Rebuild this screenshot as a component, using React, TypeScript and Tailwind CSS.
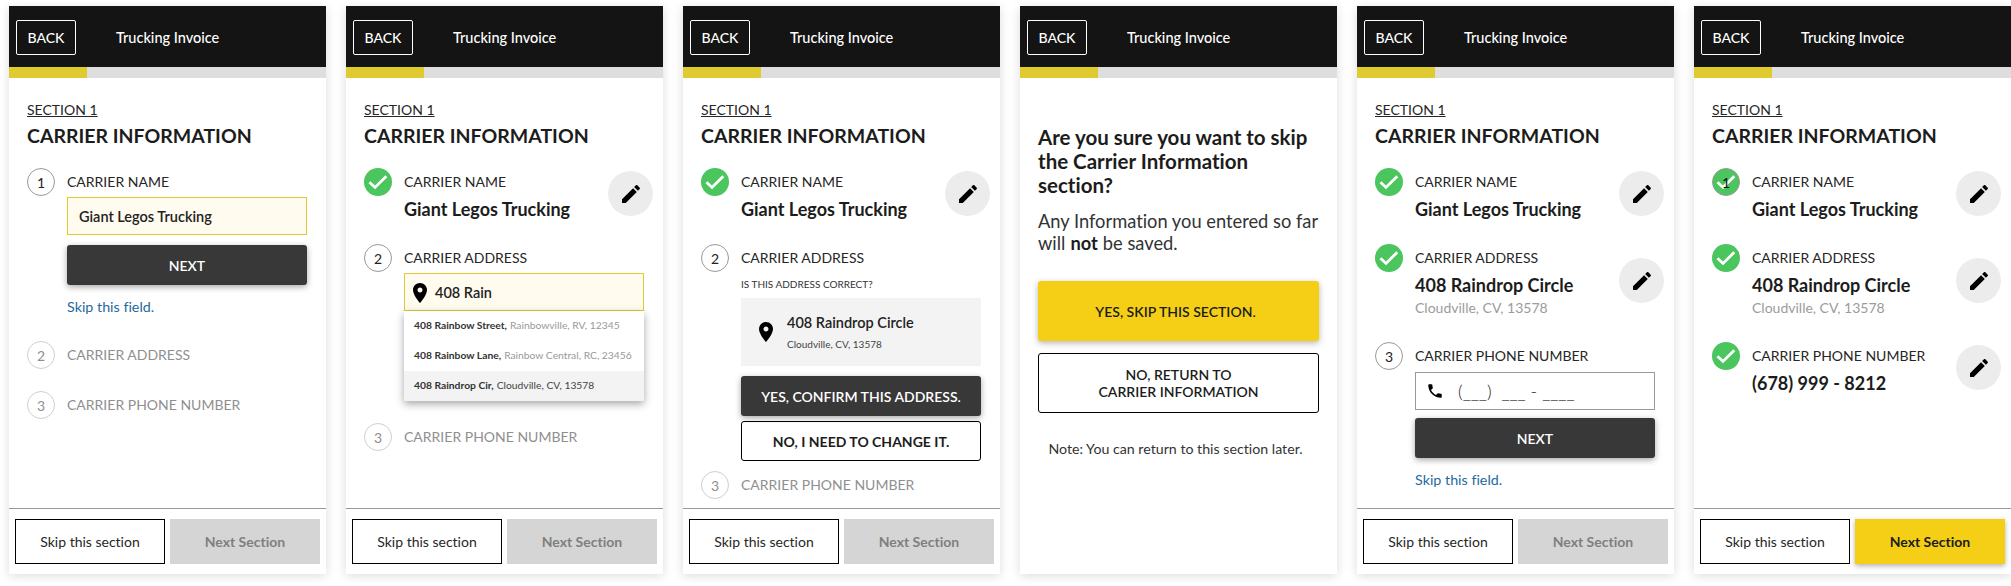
import React from "react";

const PENCIL = "M3 17.25V21h3.75L17.81 9.94l-3.75-3.75L3 17.25zM20.71 7.04c.39-.39.39-1.02 0-1.41l-2.34-2.34c-.39-.39-1.02-.39-1.41 0l-1.83 1.83 3.75 3.75 1.83-1.83z";
const PIN = "M12 2C8.13 2 5 5.13 5 9c0 5.25 7 13 7 13s7-7.75 7-13c0-3.87-3.13-7-7-7zm0 9.5c-1.38 0-2.5-1.12-2.5-2.5s1.12-2.5 2.5-2.5 2.5 1.12 2.5 2.5-1.12 2.5-2.5 2.5z";
const PHONE = "M6.62 10.79c1.44 2.83 3.76 5.14 6.59 6.59l2.2-2.2c.27-.27.67-.36 1.02-.24 1.12.37 2.33.57 3.57.57.55 0 1 .45 1 1V20c0 .55-.45 1-1 1-9.39 0-17-7.61-17-17 0-.55.45-1 1-1h3.5c.55 0 1 .45 1 1 0 1.25.2 2.45.57 3.57.11.35.03.74-.25 1.02l-2.2 2.2z";

function Icon({ d, size = 24 }: { d: string; size?: number }) {
  return (
    <svg width={size} height={size} viewBox="0 0 24 24" fill="currentColor" className="shrink-0 text-black">
      <path d={d} />
    </svg>
  );
}

function Done({ overlay }: { overlay?: boolean }) {
  return (
    <div className={`relative flex h-7 w-7 shrink-0 items-center justify-center rounded-full bg-[#4bc55d] ${overlay ? "border border-[#999]" : ""}`}>
      <svg width="28" height="28" viewBox="0 0 28 28" fill="none" className="shrink-0">
        <path d="M5.5 14.2L11 19.4L22.3 8.2" stroke="#fff" strokeWidth="2.8" />
      </svg>
      {overlay && <span className="absolute inset-0 flex items-center justify-center text-[14px] text-[#111]">1</span>}
    </div>
  );
}

function Num({ n, off }: { n: number; off?: boolean }) {
  return (
    <div className={`flex h-7 w-7 shrink-0 items-center justify-center rounded-full border text-[14px] ${off ? "border-[#cfcfcf] text-[#8f8f8f]" : "border-[#999] text-[#222]"}`}>
      {n}
    </div>
  );
}

function Pencil({ top }: { top: string }) {
  return (
    <div className={`flex h-[45px] w-[45px] shrink-0 items-center justify-center rounded-full bg-[#ececec] ${top}`}>
      <Icon d={PENCIL} />
    </div>
  );
}

function Label({ children, off }: { children: React.ReactNode; off?: boolean }) {
  return <div className={`h-7 text-[14px] leading-7 ${off ? "text-[#8f8f8f]" : "text-[#262626]"}`}>{children}</div>;
}

function Value({ children }: { children: React.ReactNode }) {
  return <div className="h-[26px] text-[18px] font-bold leading-[26px] text-[#1c1c1c]">{children}</div>;
}

function Sub() {
  return <div className="h-5 text-[14px] leading-5 text-[#9b9b9b]">Cloudville, CV, 13578</div>;
}

function Next({ mt }: { mt: string }) {
  return (
    <div className={`flex h-10 w-[240px] items-center justify-center rounded-[3px] bg-[#383838] text-[14px] font-semibold text-white shadow-[0_2px_6px_rgba(0,0,0,0.35)] ${mt}`}>
      NEXT
    </div>
  );
}

function Skip() {
  return <div className="mt-3 h-5 text-[14.3px] leading-5 text-[#1f6a9c]">Skip this field.</div>;
}

function Shell({ children, footer = "off" }: { children: React.ReactNode; footer?: "off" | "on" | "none" }) {
  return (
    <div className="flex h-[568px] w-[317px] shrink-0 flex-col bg-white font-['Lato',sans-serif] [font-variant-ligatures:none] shadow-[0_2px_10px_rgba(0,0,0,0.14)]">
      <div className="flex h-[61px] shrink-0 items-center bg-[#141414] pl-[7px] pt-[2px] text-white">
        <div className="flex h-[35px] w-[60px] items-center justify-center rounded-[2px] border border-white text-[14px] font-medium">BACK</div>
        <div className="ml-10 text-[14.5px] font-medium">Trucking Invoice</div>
      </div>
      <div className="h-[11px] shrink-0 bg-[#dedede]">
        <div className="h-full w-[78px] bg-[#dfcb2f]" />
      </div>
      <div className="min-h-0 flex-1 pl-[18px] pr-[10px]">{children}</div>
      {footer !== "none" && (
        <div className="flex h-[66px] shrink-0 gap-[5px] border-t border-[#999] px-[6px] pt-[10px]">
          <div className="flex h-[45px] w-[150px] items-center justify-center border border-black text-[14px] text-[#262626]">Skip this section</div>
          {footer === "on" ? (
            <div className="flex h-[45px] w-[150px] items-center justify-center bg-[#f4cf16] text-[14px] font-bold text-[#1c1c1c] shadow-[0_2px_5px_rgba(0,0,0,0.3)]">Next Section</div>
          ) : (
            <div className="flex h-[45px] w-[150px] items-center justify-center bg-[#d5d5d5] text-[14px] font-bold text-[#7f7f7f]">Next Section</div>
          )}
        </div>
      )}
    </div>
  );
}

function Title() {
  return (
    <>
      <div className="mt-[22px] h-5 text-[14px] leading-5 text-[#262626] underline">SECTION 1</div>
      <div className="mb-[18px] mt-[2px] h-7 text-[19.5px] font-bold leading-7 text-[#1c1c1c]">CARRIER INFORMATION</div>
    </>
  );
}

function Row({ icon, children, pencil, className = "" }: { icon: React.ReactNode; children: React.ReactNode; pencil?: string; className?: string }) {
  return (
    <div className={`flex gap-3 ${className}`}>
      {icon}
      <div className="min-w-0 flex-1">{children}</div>
      {pencil && <Pencil top={pencil} />}
    </div>
  );
}

function NameDone({ overlay }: { overlay?: boolean }) {
  return (
    <Row icon={<Done overlay={overlay} />} pencil="mt-[3px]">
      <Label>CARRIER NAME</Label>
      <Value>Giant Legos Trucking</Value>
    </Row>
  );
}

function AddressDone() {
  return (
    <Row icon={<Done />} pencil="mt-[14px]" className="mt-[22px]">
      <Label>CARRIER ADDRESS</Label>
      <Value>408 Raindrop Circle</Value>
      <Sub />
    </Row>
  );
}

function Suggestion({ bold, rest, active }: { bold: string; rest: string; active?: boolean }) {
  return (
    <div className={`flex h-[30px] items-center whitespace-nowrap pl-[10px] text-[10.3px] ${active ? "bg-[#f3f3f3] text-[#444]" : "text-[#999]"}`}>
      <span className="mr-[3px] font-bold text-[#333]">{bold}</span>
      <span>{rest}</span>
    </div>
  );
}

function Screen1() {
  return (
    <Shell>
      <Title />
      <Row icon={<Num n={1} />}>
        <Label>CARRIER NAME</Label>
        <div className="mt-px flex h-[38px] w-[240px] items-center border border-[#dfcb2f] bg-[#fffbef] pl-[11px] pt-px text-[14.5px] font-semibold text-[#222]">Giant Legos Trucking</div>
        <Next mt="mt-[10px]" />
        <Skip />
      </Row>
      <Row icon={<Num n={2} off />} className="mt-6"><Label off>CARRIER ADDRESS</Label></Row>
      <Row icon={<Num n={3} off />} className="mt-[22px]"><Label off>CARRIER PHONE NUMBER</Label></Row>
    </Shell>
  );
}

function Screen2() {
  return (
    <Shell>
      <Title />
      <NameDone />
      <Row icon={<Num n={2} />} className="mt-[22px]">
        <Label>CARRIER ADDRESS</Label>
        <div className="mt-px flex h-[38px] w-[240px] items-center border border-[#dfcb2f] bg-[#fffbef] pl-[3px] pt-px text-[14.5px] font-semibold text-[#222]">
          <Icon d={PIN} />
          <span className="ml-[3px]">408 Rain</span>
        </div>
        <div className="w-[240px] bg-white shadow-[0_3px_8px_rgba(0,0,0,0.35)]">
          <Suggestion bold="408 Rainbow Street," rest="Rainbowville, RV, 12345" />
          <Suggestion bold="408 Rainbow Lane," rest="Rainbow Central, RC, 23456" />
          <Suggestion bold="408 Raindrop Cir," rest="Cloudville, CV, 13578" active />
        </div>
      </Row>
      <Row icon={<Num n={3} off />} className="mt-[22px]"><Label off>CARRIER PHONE NUMBER</Label></Row>
    </Shell>
  );
}

function Screen3() {
  return (
    <Shell>
      <Title />
      <NameDone />
      <Row icon={<Num n={2} />} className="mt-[22px]">
        <Label>CARRIER ADDRESS</Label>
        <div className="mt-1 h-4 text-[10px] leading-4 text-[#333]">IS THIS ADDRESS CORRECT?</div>
        <div className="mt-[6px] flex h-[68px] w-[240px] items-center bg-[#f3f3f3] pl-[13px]">
          <Icon d={PIN} />
          <div className="ml-[9px]">
            <div className="h-5 text-[14.5px] font-semibold leading-5 text-[#222]">408 Raindrop Circle</div>
            <div className="mt-[3px] text-[10px] leading-4 text-[#444]">Cloudville, CV, 13578</div>
          </div>
        </div>
        <div className="mt-[10px] flex h-10 w-[240px] items-center justify-center rounded-[3px] bg-[#383838] text-[14px] font-semibold text-white shadow-[0_2px_6px_rgba(0,0,0,0.35)]">YES, CONFIRM THIS ADDRESS.</div>
        <div className="mt-[5px] flex h-10 w-[240px] items-center justify-center rounded-[3px] border border-black text-[14px] font-bold text-[#1c1c1c]">NO, I NEED TO CHANGE IT.</div>
      </Row>
      <Row icon={<Num n={3} off />} className="mt-[10px]"><Label off>CARRIER PHONE NUMBER</Label></Row>
    </Shell>
  );
}

function Screen4() {
  return (
    <Shell footer="none">
      <div className="w-[281px]">
        <div className="mt-[47px] text-[20.5px] font-bold leading-6 text-[#1c1c1c]">Are you sure you want to skip the Carrier Information section?</div>
        <div className="mt-[13px] text-[18.3px] leading-[22px] text-[#333]">
          <div className="whitespace-nowrap">Any Information you entered so far</div>
          <div className="flex gap-[5px] whitespace-nowrap">
            <span>will</span>
            <span className="font-bold text-[#1c1c1c]">not</span>
            <span>be saved.</span>
          </div>
        </div>
        <div className="mt-[27px] flex h-[60px] items-center justify-center rounded-[3px] bg-[#f4cf16] pr-[6px] text-[14px] font-semibold text-[#1c1c1c] shadow-[0_2px_6px_rgba(0,0,0,0.3)]">YES, SKIP THIS SECTION.</div>
        <div className="mt-3 flex h-[60px] flex-col items-center justify-center rounded-[3px] border border-black text-[14px] font-semibold leading-[17px] text-[#1c1c1c]">
          <div>NO, RETURN TO</div>
          <div>CARRIER INFORMATION</div>
        </div>
        <div className="mt-[26px] pr-[6px] text-center text-[14.2px] leading-5 text-[#333]">Note: You can return to this section later.</div>
      </div>
    </Shell>
  );
}

function Screen5() {
  return (
    <Shell>
      <Title />
      <NameDone />
      <AddressDone />
      <Row icon={<Num n={3} />} className="mt-6">
        <Label>CARRIER PHONE NUMBER</Label>
        <div className="mt-[2px] flex h-[38px] w-[240px] items-center border border-[#999] pl-[10px] text-[14px] text-[#222]">
          <Icon d={PHONE} size={18} />
          <span className="ml-[14px] whitespace-pre text-[18px] font-light">(___)  ___ - ____</span>
        </div>
        <Next mt="mt-2" />
        <Skip />
      </Row>
    </Shell>
  );
}

function Screen6() {
  return (
    <Shell footer="on">
      <Title />
      <NameDone overlay />
      <AddressDone />
      <Row icon={<Done />} pencil="mt-[3px]" className="mt-6">
        <Label>CARRIER PHONE NUMBER</Label>
        <Value>(678) 999 - 8212</Value>
      </Row>
    </Shell>
  );
}

export default function App() {
  return (
    <div className="flex h-[586px] w-[2011px] gap-5 overflow-hidden bg-white pl-[9px] pt-[6px]">
      <Screen1 />
      <Screen2 />
      <Screen3 />
      <Screen4 />
      <Screen5 />
      <Screen6 />
    </div>
  );
}
